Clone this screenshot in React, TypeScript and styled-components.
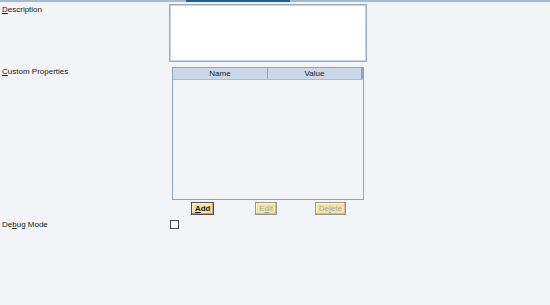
import React from "react";
import styled, { createGlobalStyle } from "styled-components";

const Global = createGlobalStyle`
  html, body { margin: 0; padding: 0; background: #f2f4f7; }
  body { font-family: "Liberation Sans", Arial, sans-serif; font-size: 8px; color: #1c1c1c; }
`;

const Page = styled.div`
  width: 550px;
  height: 305px;
  background: #f2f4f7;
  display: flex;
  flex-direction: column;
`;

const TopBar = styled.div`
  height: 2px;
  background: #a6b9d1;
  display: flex;
`;

const TopSegment = styled.div`
  margin-left: 186px;
  width: 104px;
  background: #1f5f9c;
`;

const Form = styled.div`
  display: grid;
  grid-template-columns: 169px 1fr;
  padding-top: 2px;
`;

const Label = styled.div<{ $top: number }>`
  padding-left: 2px;
  padding-top: ${(p) => p.$top}px;
  font-size: 8px;
  line-height: 10px;
  color: #202020;
`;

const U = styled.span`
  text-decoration: underline;
`;

const TextArea = styled.div`
  width: 194px;
  height: 54px;
  background: #fff;
  border: 1px solid #98aec8;
  box-shadow: inset 1px 1px 0 #c7d4e3, inset -1px -1px 0 #c7d4e3;
  padding: 1px;
`;

const TableBlock = styled.div`
  margin-top: 5px;
  margin-left: 3px;
  width: 192px;
  display: flex;
  flex-direction: column;
`;

const Table = styled.div`
  height: 131px;
  border: 1px solid #8ea4bf;
  background: #f2f4f7;
  display: flex;
  flex-direction: column;
`;

const HeaderRow = styled.div`
  display: grid;
  grid-template-columns: 95px 1fr;
  height: 11px;
  background: #c9d9e9;
  border-bottom: 1px solid #a8bdd4;
`;

const HeaderCell = styled.div<{ $last?: boolean }>`
  text-align: center;
  font-size: 8px;
  line-height: 11px;
  color: #1a1a1a;
  border-right: ${(p) => (p.$last ? "2px solid #8aa3c2" : "1px solid #8ea4bf")};
`;

const ButtonRow = styled.div`
  display: grid;
  grid-template-columns: 1fr 1fr 1fr;
  margin-top: 2px;
  padding-right: 2px;
`;

const ButtonCell = styled.div<{ $shift: number }>`
  display: flex;
  justify-content: center;
  transform: translateX(${(p) => p.$shift}px);
`;

const Btn = styled.div<{ $disabled?: boolean }>`
  height: 11px;
  padding: 0 3px;
  background: #f3e3a6;
  border: 1px solid ${(p) => (p.$disabled ? "#9a9a8a" : "#54504a")};
  box-shadow: inset -1px -1px 0 ${(p) => (p.$disabled ? "#c8bd8f" : "#b9a866")}, inset 1px 1px 0 #fff6d0;
  font-size: 8px;
  line-height: 11px;
  font-weight: ${(p) => (p.$disabled ? "normal" : "bold")};
  color: ${(p) => (p.$disabled ? "#a5a5a0" : "#1a1a1a")};
`;

const Checkbox = styled.div`
  margin-top: 5px;
  margin-left: 1px;
  width: 7px;
  height: 7px;
  border: 1px solid #4a4a4a;
  background: #fff;
`;

export default function App() {
  return (
    <Page>
      <Global />
      <TopBar>
        <TopSegment />
      </TopBar>
      <Form>
        <Label $top={1}>
          <U>D</U>escription
        </Label>
        <TextArea />
        <Label $top={5}>
          <U>C</U>ustom Properties
        </Label>
        <TableBlock>
          <Table>
            <HeaderRow>
              <HeaderCell>Name</HeaderCell>
              <HeaderCell $last>Value</HeaderCell>
            </HeaderRow>
          </Table>
          <ButtonRow>
            <ButtonCell $shift={-1}>
              <Btn>
                <U>A</U>dd
              </Btn>
            </ButtonCell>
            <ButtonCell $shift={-1}>
              <Btn $disabled>
                E<U>d</U>it
              </Btn>
            </ButtonCell>
            <ButtonCell $shift={0}>
              <Btn $disabled>
                De<U>l</U>ete
              </Btn>
            </ButtonCell>
          </ButtonRow>
        </TableBlock>
        <Label $top={5}>
          De<U>b</U>ug Mode
        </Label>
        <Checkbox />
      </Form>
    </Page>
  );
}
